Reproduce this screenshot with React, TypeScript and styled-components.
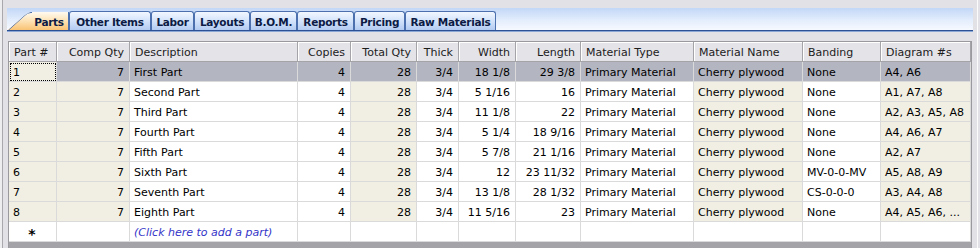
import React from "react";
import styled, { createGlobalStyle, css } from "styled-components";

const GlobalStyle = createGlobalStyle`
  html, body {
    margin: 0;
    padding: 0;
    background: #e2e1e6;
    font-family: "DejaVu Sans", Verdana, sans-serif;
    font-size: 11px;
    color: #000;
  }
`;

type Align = "left" | "right" | "center";
type Tone = "white" | "beige" | "selected";

const Frame = styled.div`
  width: 980px;
  height: 248px;
  box-sizing: border-box;
  padding: 8px 7px 0 7px;
  overflow: hidden;
  box-shadow: inset 2px 0 #ededf0, inset 3px 0 #a9a9ad, inset -2px 0 #e2e1e6,
    inset -3px 0 #fbfbfb;
`;

const TabStrip = styled.div`
  height: 22px;
  display: flex;
  align-items: flex-end;
  padding-left: 1px;
  background: linear-gradient(to bottom, #c2d7f7 0%, #e3edfc 55%, #f6f9ff 100%);
  border-bottom: 1px solid #2d5194;
  box-shadow: 0 1px 0 #8aa7d6;
`;

const tabBase = css`
  height: 19px;
  box-sizing: border-box;
  display: flex;
  align-items: center;
  justify-content: center;
  padding-top: 1px;
  font-weight: bold;
  font-size: 10.5px;
  letter-spacing: -0.3px;
  color: #0c1a44;
  white-space: nowrap;
`;

const Tab = styled.div<{ $w: number }>`
  ${tabBase};
  width: ${(p) => p.$w}px;
  border: 1px solid #4c70ad;
  border-bottom: none;
  border-radius: 3px 3px 0 0;
  background: linear-gradient(to bottom, #f2f7ff 0%, #d6e5fb 45%, #b3cbf1 100%);
`;

const ActiveTab = styled.div<{ $w: number }>`
  ${tabBase};
  position: relative;
  width: ${(p) => p.$w}px;
  height: 18px;
  padding-left: 22px;
  background: linear-gradient(to bottom, #fffaf0 0%, #fde2b4 50%, #f9c273 100%);
  clip-path: polygon(0 100%, 17px 3px, 22px 0, 100% 0, 100% 100%);
  border-right: 1px solid #4c70ad;
`;

const TabEdge = styled.svg`
  position: absolute;
  left: 0;
  top: 0;
`;

const Grid = styled.div`
  margin-top: 10px;
  margin-left: 1px;
  width: 964px;
  height: 220px;
  box-sizing: border-box;
  border: 1px solid #9a9a9e;
  background: #a4a4a8;
`;

const Row = styled.div`
  display: grid;
  grid-template-columns: 48px 73px 168px 53px 66px 42px 57px 65px 113px 109px 78px 90px;
`;

const HeadCell = styled.div<{ $align: Align }>`
  height: 20px;
  line-height: 21px;
  box-sizing: border-box;
  padding: 0 5px;
  text-align: ${(p) => p.$align};
  background: #e4e3e8;
  color: #1c1c1c;
  border-right: 1px solid #a3a3a8;
  border-bottom: 1px solid #a3a3a8;
  box-shadow: inset 1px 1px #ffffff;
  white-space: nowrap;
  overflow: hidden;
`;

const toneColor: Record<Tone, string> = {
  white: "#ffffff",
  beige: "#f1efe3",
  selected: "#b3b5c0",
};

const Cell = styled.div<{ $align: Align; $tone: Tone; $focus?: boolean }>`
  height: 20px;
  line-height: 21px;
  box-sizing: border-box;
  padding: 0 5px 0 4px;
  text-align: ${(p) => p.$align};
  background: ${(p) => toneColor[p.$tone]};
  border-right: 1px solid #dadada;
  border-bottom: 1px solid #dadada;
  white-space: nowrap;
  overflow: hidden;
  ${(p) =>
    p.$focus &&
    css`
      outline: 1px dotted #000;
      outline-offset: -2px;
    `}
`;

const NewRowMark = styled.span`
  font-size: 14px;
  font-weight: bold;
  position: relative;
  top: 2px;
`;

const AddHint = styled.span`
  font-style: italic;
  color: #3434c8;
`;

type Col = { title: string; align: Align; tinted: boolean };

const columns: Col[] = [
  { title: "Part #", align: "left", tinted: true },
  { title: "Comp Qty", align: "right", tinted: true },
  { title: "Description", align: "left", tinted: false },
  { title: "Copies", align: "right", tinted: false },
  { title: "Total Qty", align: "right", tinted: true },
  { title: "Thick", align: "right", tinted: false },
  { title: "Width", align: "right", tinted: false },
  { title: "Length", align: "right", tinted: false },
  { title: "Material Type", align: "left", tinted: false },
  { title: "Material Name", align: "left", tinted: true },
  { title: "Banding", align: "left", tinted: false },
  { title: "Diagram #s", align: "left", tinted: true },
];

const parts: string[][] = [
  ["1", "7", "First Part", "4", "28", "3/4", "18 1/8", "29 3/8", "Primary Material", "Cherry plywood", "None", "A4, A6"],
  ["2", "7", "Second Part", "4", "28", "3/4", "5 1/16", "16", "Primary Material", "Cherry plywood", "None", "A1, A7, A8"],
  ["3", "7", "Third Part", "4", "28", "3/4", "11 1/8", "22", "Primary Material", "Cherry plywood", "None", "A2, A3, A5, A8"],
  ["4", "7", "Fourth Part", "4", "28", "3/4", "5 1/4", "18 9/16", "Primary Material", "Cherry plywood", "None", "A4, A6, A7"],
  ["5", "7", "Fifth Part", "4", "28", "3/4", "5 7/8", "21 1/16", "Primary Material", "Cherry plywood", "None", "A2, A7"],
  ["6", "7", "Sixth Part", "4", "28", "3/4", "12", "23 11/32", "Primary Material", "Cherry plywood", "MV-0-0-MV", "A5, A8, A9"],
  ["7", "7", "Seventh Part", "4", "28", "3/4", "13 1/8", "28 1/32", "Primary Material", "Cherry plywood", "CS-0-0-0", "A3, A4, A8"],
  ["8", "7", "Eighth Part", "4", "28", "3/4", "11 5/16", "23", "Primary Material", "Cherry plywood", "None", "A4, A5, A6, ..."],
];

const tabs = [
  { label: "Other Items", w: 82 },
  { label: "Labor", w: 43 },
  { label: "Layouts", w: 56 },
  { label: "B.O.M.", w: 47 },
  { label: "Reports", w: 57 },
  { label: "Pricing", w: 51 },
  { label: "Raw Materials", w: 91 },
];

export default function App() {
  const selectedRow = 0;

  return (
    <Frame>
      <GlobalStyle />
      <TabStrip>
        <ActiveTab $w={61}>
          <TabEdge width="24" height="18" viewBox="0 0 24 18">
            <path d="M0.5 18 L17 3.2 Q19.5 0.5 23 0.5 L24 0.5" fill="none" stroke="#4c70ad" strokeWidth="1" />
          </TabEdge>
          Parts
        </ActiveTab>
        {tabs.map((t) => (
          <Tab key={t.label} $w={t.w}>
            {t.label}
          </Tab>
        ))}
      </TabStrip>

      <Grid>
        <Row>
          {columns.map((c) => (
            <HeadCell key={c.title} $align={c.align}>
              {c.title}
            </HeadCell>
          ))}
        </Row>
        {parts.map((part, r) => (
          <Row key={r}>
            {part.map((value, i) => {
              const col = columns[i];
              const focus = r === selectedRow && i === 0;
              let tone: Tone = col.tinted ? "beige" : "white";
              if (r === selectedRow && !focus) tone = "selected";
              return (
                <Cell key={i} $align={col.align} $tone={tone} $focus={focus}>
                  {value}
                </Cell>
              );
            })}
          </Row>
        ))}
        <Row>
          {columns.map((c, i) => (
            <Cell key={c.title} $align={i === 0 ? "center" : c.align} $tone="white">
              {i === 0 && <NewRowMark>*</NewRowMark>}
              {i === 2 && <AddHint>(Click here to add a part)</AddHint>}
            </Cell>
          ))}
        </Row>
      </Grid>
    </Frame>
  );
}
